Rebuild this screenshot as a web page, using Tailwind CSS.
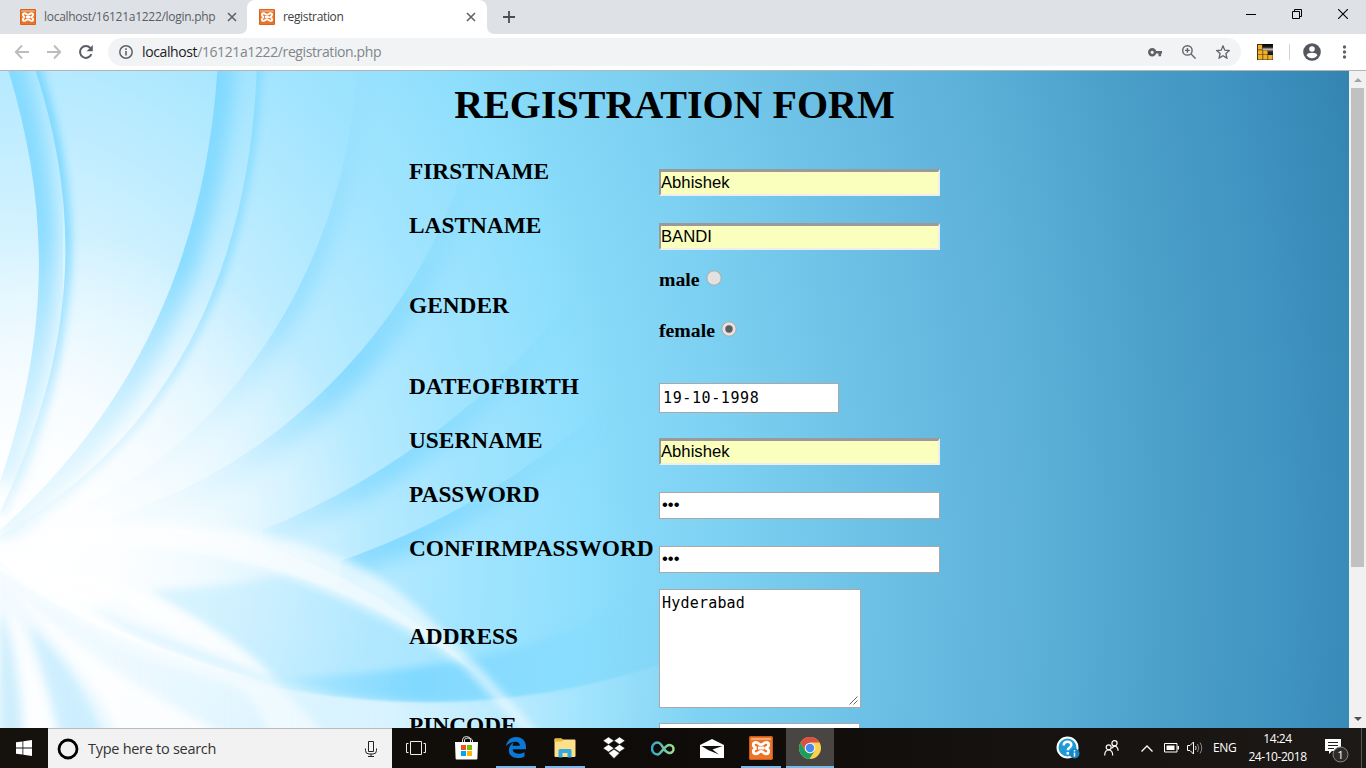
<!DOCTYPE html>
<html lang="en">
<head>
<meta charset="utf-8">
<title>registration</title>
<script src="https://cdn.jsdelivr.net/npm/@tailwindcss/browser@4"></script>
</head>
<body class="w-[1366px] h-[768px] overflow-hidden flex flex-col bg-white font-['Open_Sans','Noto_Sans',sans-serif] text-black">

<svg class="hidden">
  <symbol id="xampp" viewBox="0 0 24 24">
    <rect width="24" height="24" rx="2" fill="#ec7428"/>
    <rect x=".5" y=".5" width="23" height="23" rx="2" fill="none" stroke="#c95a17"/>
    <path d="M2 4V3q0-1 1-1h18q1 0 1 1v1z" fill="#f6a878"/>
    <path d="M9 12h6M7.500 12.100C5 11.200 4.300 10.300 4.300 8.700C4.300 7.200 5.300 6.300 6.900 6.300C9.300 6.300 9.600 8.700 12 8.700C14.400 8.700 14.700 6.300 17.100 6.300C18.700 6.300 19.700 7.200 19.700 8.700C19.700 10.300 19 11.200 16.500 12.100C19 12.900 19.700 13.800 19.700 15.300C19.700 16.900 18.700 17.800 17.100 17.800C14.700 17.800 14.400 15.400 12 15.400C9.600 15.400 9.300 17.800 6.900 17.800C5.300 17.800 4.300 16.900 4.300 15.300C4.300 13.800 5 12.900 7.500 12.100" fill="none" stroke="#fff" stroke-width="2.800" stroke-linejoin="round"/>
  </symbol>
</svg>

<!-- Tab strip -->
<header class="h-[34px] shrink-0 bg-[#dee1e6] flex text-[12px] text-[#5a5e63]">
  <div class="w-[247px] flex items-center pl-5">
    <svg class="size-4 shrink-0"><use href="#xampp"/></svg>
    <span class="ml-2 w-[180px] whitespace-nowrap tracking-[-0.28px]">localhost/16121a1222/login.php</span>
    <svg class="size-[10px] ml-[3px] shrink-0" viewBox="0 0 10 10"><path d="M1 1l8 8M9 1l-8 8" stroke="#5f6368" stroke-width="1.6"/></svg>
  </div>
  <div class="w-[240px] bg-white rounded-t-lg flex items-center pl-3 relative">
    <svg class="absolute -left-2 bottom-0 size-2" viewBox="0 0 8 8"><path d="M8 0v8H0q8 0 8-8" fill="#fff"/></svg>
    <svg class="absolute -right-2 bottom-0 size-2" viewBox="0 0 8 8"><path d="M0 0v8h8Q0 8 0 0" fill="#fff"/></svg>
    <svg class="size-4 shrink-0"><use href="#xampp"/></svg>
    <span class="ml-2 w-[180px] text-[#3c4043] tracking-[-0.35px]">registration</span>
    <svg class="size-[10px] ml-[3px] shrink-0" viewBox="0 0 10 10"><path d="M1 1l8 8M9 1l-8 8" stroke="#5f6368" stroke-width="1.6"/></svg>
  </div>
  <div class="pl-4 flex items-center"><svg class="size-3" viewBox="0 0 12 12"><path d="M6 0v12M0 6h12" stroke="#4a4d51" stroke-width="1.8"/></svg></div>
  <div class="ml-auto flex items-start pt-[9px] pr-[18px] gap-9">
    <svg class="size-[10px]" viewBox="0 0 10 10"><path d="M0 5.5h10" stroke="#000"/></svg>
    <svg class="size-[10px]" viewBox="0 0 10 10"><path d="M.5 2.5h7v7h-7zM2.500 2.500v-2h7v7h-2" fill="none" stroke="#000"/></svg>
    <svg class="size-[10px]" viewBox="0 0 10 10"><path d="M0 0l10 10M10 0L0 10" stroke="#000" stroke-width="1.100"/></svg>
  </div>
</header>

<!-- Toolbar -->
<div class="h-[37px] shrink-0 bg-white border-b border-[#b6b4b6] flex items-center">
  <svg class="w-4 h-4 ml-[14px]" viewBox="0 0 16 16"><path d="M15 8H2M8 1.500L1.800 8 8 14.500" fill="none" stroke="#babcbe" stroke-width="1.900"/></svg>
  <svg class="w-4 h-4 ml-4" viewBox="0 0 16 16"><path d="M1 8h13M8 1.500L14.200 8 8 14.500" fill="none" stroke="#babcbe" stroke-width="1.900"/></svg>
  <svg class="w-4 h-4 ml-4" viewBox="0 0 16 16"><path d="M13.400 10.200A5.900 5.900 0 1 1 12.400 4.100" fill="none" stroke="#5a5e63" stroke-width="2"/><path d="M14.800 1v6.200H8.600z" fill="#5a5e63"/></svg>
  <div class="ml-[14px] w-[1133px] h-7 rounded-full bg-[#f1f3f4] flex items-center">
    <svg class="ml-[11px] size-[14px]" viewBox="0 0 14 14"><circle cx="7" cy="7" r="6.200" fill="none" stroke="#5f6368" stroke-width="1.500"/><path d="M7 6v4.500M7 3.300v1.600" stroke="#5f6368" stroke-width="1.600"/></svg>
    <span class="ml-[9px] text-[14px] leading-7 tracking-[-0.39px] text-[#80868b] whitespace-nowrap"><span class="text-[#202124]">localhost</span>/16121a1222/registration.php</span>
    <svg class="ml-auto w-[14px] h-[9px]" viewBox="0 0 14 9"><circle cx="4.200" cy="4.300" r="2.900" fill="none" stroke="#5f6368" stroke-width="2.600"/><path d="M7 4.300h7M11.800 4.300v4" stroke="#5f6368" stroke-width="2.600"/></svg>
    <svg class="ml-5 size-[14px]" viewBox="0 0 14 14"><circle cx="5.400" cy="5.400" r="4.700" fill="none" stroke="#5f6368" stroke-width="1.400"/><path d="M9 9l4.600 4.600M3 5.400h4.800M5.400 3v4.800" stroke="#5f6368" stroke-width="1.400"/></svg>
    <svg class="ml-5 mr-[11px] size-[14px]" viewBox="0 0 14 14"><path d="M7 1l1.800 4.200 4.500.4-3.400 3 1 4.500L7 10.700l-3.900 2.400 1-4.500-3.400-3 4.500-.4z" fill="none" stroke="#5f6368" stroke-width="1.300"/></svg>
  </div>
  <svg class="ml-4 size-4" viewBox="0 0 16 16"><defs><linearGradient id="ext" x2="0" y2="1"><stop offset="0" stop-color="#000"/><stop offset=".3" stop-color="#222"/><stop offset=".48" stop-color="#c9c4bd"/><stop offset=".7" stop-color="#2a2725"/><stop offset="1" stop-color="#111"/></linearGradient></defs><rect width="16" height="16" fill="#4a3510"/><path d="M5.500 0H16v11h-5V6H5.500z" fill="url(#ext)"/><path d="M1 1h4v4.500H1zM1 6.200h4.500v4.200H1zM6.200 6.200h4.300v4.200H6.200zM1 11h4.500v4.500H1zM6.200 11h4.300v4.500H6.200zM11.200 11h4.300v4.500h-4.300z" fill="#efb02b"/></svg>
  <div class="ml-4 w-px h-4 bg-[#d0d2d5]"></div>
  <svg class="ml-[13px] size-[18px]" viewBox="0 0 18 18"><circle cx="9" cy="9" r="8.800" fill="#54585d"/><circle cx="9" cy="6" r="2.800" fill="#fff"/><path d="M3.600 12.200c1-3.200 9.800-3.200 10.800 0-2.200 4-8.600 4-10.800 0" fill="#fff"/></svg>
  <svg class="ml-[21px] w-[5px] h-[14px]" viewBox="0 0 5 14"><g fill="#5f6368"><circle cx="2.500" cy="2" r="1.700"/><circle cx="2.500" cy="7" r="1.700"/><circle cx="2.500" cy="12" r="1.700"/></g></svg>
</div>

<!-- Page viewport -->
<div class="h-[657px] shrink-0 flex overflow-hidden">
  <main class="w-[1349px] h-[657px] relative overflow-hidden font-['Liberation_Serif',serif] font-bold">
    <svg class="absolute inset-0 w-[1349px] h-[657px]" viewBox="0 71 1349 657" preserveAspectRatio="none">
      <defs>
        <radialGradient id="bg" gradientUnits="userSpaceOnUse" cx="0" cy="0" r="1420" gradientTransform="translate(0 560) scale(1 1.3)">
          <stop offset="0" stop-color="#fcfeff"/><stop offset=".08" stop-color="#f4fbff"/>
          <stop offset=".16" stop-color="#daf4ff"/><stop offset=".24" stop-color="#bdecff"/>
          <stop offset=".32" stop-color="#a4e5ff"/><stop offset=".41" stop-color="#8edffd"/>
          <stop offset=".46" stop-color="#85d7f7"/><stop offset=".54" stop-color="#78cdee"/>
          <stop offset=".63" stop-color="#6bbee4"/><stop offset=".73" stop-color="#5cb1d9"/>
          <stop offset=".83" stop-color="#4a9fc9"/><stop offset=".91" stop-color="#3f93c0"/>
          <stop offset="1" stop-color="#3181ae"/>
        </radialGradient>
        <radialGradient id="glow" gradientUnits="userSpaceOnUse" cx="60" cy="545" r="310">
          <stop offset="0" stop-color="#fff" stop-opacity=".9"/><stop offset=".4" stop-color="#fff" stop-opacity=".6"/><stop offset="1" stop-color="#fff" stop-opacity="0"/>
        </radialGradient>
        <radialGradient id="ink" gradientUnits="userSpaceOnUse" cx="0" cy="560" r="620">
          <stop offset="0" stop-color="#74d4ff" stop-opacity="0"/><stop offset=".4" stop-color="#74d4ff" stop-opacity=".3"/><stop offset=".65" stop-color="#70d3ff" stop-opacity=".95"/><stop offset=".8" stop-color="#74d4fc" stop-opacity=".6"/><stop offset="1" stop-color="#74d4fc" stop-opacity="0"/>
        </radialGradient>
        <linearGradient id="sweep" gradientUnits="userSpaceOnUse" x1="0" x2="700" y1="0" y2="0">
          <stop offset="0" stop-color="#e6f7ff" stop-opacity=".5"/><stop offset=".55" stop-color="#e6f7ff" stop-opacity=".75"/><stop offset="1" stop-color="#d8f3ff" stop-opacity="0"/>
        </linearGradient>
        <linearGradient id="band" gradientUnits="userSpaceOnUse" x1="270" x2="640" y1="0" y2="0">
          <stop offset="0" stop-color="#7ad6ff" stop-opacity=".2"/><stop offset=".4" stop-color="#76d5ff" stop-opacity=".8"/><stop offset="1" stop-color="#76d5ff" stop-opacity="0"/>
        </linearGradient>
        <filter id="b1" x="-30%" y="-30%" width="160%" height="160%"><feGaussianBlur stdDeviation="1.200"/></filter>
        <filter id="b4" x="-30%" y="-30%" width="160%" height="160%"><feGaussianBlur stdDeviation="4"/></filter>
        <filter id="b9" x="-60%" y="-30%" width="220%" height="160%"><feGaussianBlur stdDeviation="9"/></filter>
        <path id="cA" d="M5 60C50 200 52 330 0 482"/><clipPath id="kA"><path d="M5 60C50 200 52 330 0 482V728H1349V60z"/></clipPath>
        <path id="cB" d="M32 60C80 200 82 340 0 512"/><clipPath id="kB"><path d="M32 60C80 200 82 340 0 512V728H1349V60z"/></clipPath>
        <path id="cC" d="M218 60C208 240 145 400 0 530"/><clipPath id="kC"><path d="M218 60C208 240 145 400 0 530V728H1349V60z"/></clipPath>
        <path id="cD" d="M257 60C252 250 185 430 0 535"/><clipPath id="kD"><path d="M257 60C252 250 185 430 0 535V728H1349V60z"/></clipPath>
        <path id="cE" d="M357 60C350 270 220 455 60 515"/><clipPath id="kE"><path d="M357 60C350 270 220 455 60 515V728H1349V60z"/></clipPath>
        <path id="cF" d="M482 60C475 260 310 460 110 517"/><clipPath id="kF"><path d="M482 60C475 260 310 460 110 517V728H1349V60z"/></clipPath>
        <path id="cG" d="M640 180C560 360 400 475 262 530"/><clipPath id="kG"><path d="M640 180C560 360 400 475 262 530V728H1349V180z"/></clipPath>
        <path id="cH" d="M690 320C580 445 460 520 340 561"/><clipPath id="kH"><path d="M690 320C580 445 460 520 340 561V728H1349V320z"/></clipPath>
      </defs>
      <rect y="60" width="1349" height="680" fill="url(#bg)"/>
      <g fill="none" stroke="#6ed3ff">
        <g clip-path="url(#kA)"><use href="#cA" stroke-width="36" filter="url(#b9)" opacity=".7"/></g>
        <g clip-path="url(#kB)"><use href="#cB" stroke-width="12" filter="url(#b4)" opacity=".8"/></g>
        <g clip-path="url(#kC)"><use href="#cC" stroke-width="36" filter="url(#b9)" opacity=".7"/></g>
        <g clip-path="url(#kD)"><use href="#cD" stroke-width="10" filter="url(#b4)" opacity=".6"/></g>
      </g>
      <g fill="none" stroke="url(#ink)">
        <g clip-path="url(#kE)"><use href="#cE" stroke-width="26" filter="url(#b9)" opacity=".5"/></g>
        <g clip-path="url(#kF)"><use href="#cF" stroke-width="40" filter="url(#b9)" opacity=".7"/></g>
        <g clip-path="url(#kG)"><use href="#cG" stroke-width="34" filter="url(#b9)" opacity=".65"/></g>
        <g clip-path="url(#kH)"><use href="#cH" stroke-width="36" filter="url(#b9)" opacity=".75"/></g>
      </g>
      <rect y="230" width="370" height="510" fill="url(#glow)"/>
      <path d="M150 590Q230 588 292 573Q380 605 440 650L470 660Q380 685 275 680Q200 620 150 590z" fill="#aee7ff" opacity=".4" filter="url(#b4)"/>
      <path d="M275 679Q400 674 500 652Q580 632 640 590V668Q540 704 430 702Q340 700 275 679z" fill="url(#band)" filter="url(#b4)"/>
      <path d="M0 562C90 640 200 665 275 687C420 715 560 705 700 650V740H0z" fill="url(#sweep)" filter="url(#b1)"/>
      <path d="M120 600C180 640 230 655 270 680C190 665 130 640 90 605z" fill="#d6f2ff" opacity=".6" filter="url(#b4)"/>
      <path d="M0 546C110 515 230 515 340 558C400 582 430 620 480 668L540 735H528L465 668C400 620 300 575 200 550C120 539 50 544 0 550z" fill="#fff" opacity=".6" filter="url(#b4)"/>
      <path d="M0 550C100 538 180 544 290 574C380 604 440 645 480 676C420 620 350 570 230 535C140 522 60 530 0 545z" fill="#fff" opacity=".35" filter="url(#b1)"/>
      <path d="M0 557C110 575 220 615 278 682C200 645 80 610 0 566z" fill="#fff" opacity=".75" filter="url(#b4)"/>
      <path d="M0 566C90 625 180 655 280 687L330 740H270Q260 700 232 685Q100 650 0 570z" fill="#fff" opacity=".5" filter="url(#b4)"/>
      <path d="M0 566C90 625 180 660 285 688Q120 650 0 570z" fill="#fff" opacity=".8" filter="url(#b1)"/>
      <path d="M0 574C50 640 90 670 118 735H225C150 695 60 640 0 574z" fill="#fff" opacity=".85" filter="url(#b4)"/>
      <path d="M0 592C22 640 26 690 26 740H58C40 680 30 640 0 592z" fill="#fff" opacity=".85" filter="url(#b4)"/>
      <path d="M0 610Q18 660 22 740H0z" fill="#b9e6fb" opacity=".6" filter="url(#b4)"/>
      <path d="M28 625Q80 670 105 740H62Q45 670 28 625z" fill="#b9e8ff" opacity=".6" filter="url(#b4)"/>
    </svg>

    <div class="relative">
      <h1 class="h-[73px] pt-[11px] text-[40px] leading-[46px] text-center">REGISTRATION FORM</h1>
      <div class="pl-[409px] text-[23.35px]">
        <div class="h-[54px] flex"><h3 class="w-[250px] leading-[54px]">FIRSTNAME</h3>
          <div class="mt-[25px] w-[281px] h-[27px] bg-[#faffbd] border-2 border-t-[3px] border-t-[#9a9a9a] border-l-[#9a9a9a] border-r-[#eee] border-b-[#eee] font-['Liberation_Sans',sans-serif] font-normal text-[16.67px] leading-[21px]">Abhishek</div></div>
        <div class="h-[54px] flex"><h3 class="w-[250px] leading-[54px]">LASTNAME</h3>
          <div class="mt-[25px] w-[281px] h-[27px] bg-[#faffbd] border-2 border-t-[3px] border-t-[#9a9a9a] border-l-[#9a9a9a] border-r-[#eee] border-b-[#eee] font-['Liberation_Sans',sans-serif] font-normal text-[16.67px] leading-[21px]">BANDI</div></div>
        <div class="h-[107px] flex"><h3 class="w-[250px] leading-[106px]">GENDER</h3>
          <div class="pt-[14px] text-[19.8px] leading-[26px]">
            <div class="h-[51px] flex">male<svg class="ml-[6px] mt-1 size-4" viewBox="0 0 16 16"><circle cx="8" cy="8" r="7.200" fill="#e4e2e1" stroke="#a9a9a9" stroke-width="1"/></svg></div>
            <div class="flex">female<svg class="ml-[6px] mt-1 size-4" viewBox="0 0 16 16"><circle cx="8" cy="8" r="7.200" fill="#e4e2e1" stroke="#a9a9a9" stroke-width="1"/><circle cx="8" cy="8" r="3.700" fill="#5c5c5c"/></svg></div>
          </div></div>
        <div class="h-[54px] flex"><h3 class="w-[250px] leading-[54px]">DATEOFBIRTH</h3>
          <div class="mt-6 w-[180px] h-[30px] bg-white border border-[#a9a9a9] pl-[3px] font-['DejaVu_Sans_Mono',monospace] font-normal text-[15px] tracking-[0.6px] leading-[29px]">19-10-1998</div></div>
        <div class="h-[54px] flex"><h3 class="w-[250px] leading-[54px]">USERNAME</h3>
          <div class="mt-[25px] w-[281px] h-[27px] bg-[#faffbd] border-2 border-t-[3px] border-t-[#9a9a9a] border-l-[#9a9a9a] border-r-[#eee] border-b-[#eee] font-['Liberation_Sans',sans-serif] font-normal text-[16.67px] leading-[21px]">Abhishek</div></div>
        <div class="h-[54px] flex"><h3 class="w-[250px] leading-[54px]">PASSWORD</h3>
          <div class="mt-[25px] w-[281px] h-[27px] bg-white border border-[#a9a9a9] pl-[2px] font-['Liberation_Sans',sans-serif] font-normal text-[16.67px] leading-[24px]">•••</div></div>
        <div class="h-[54px] flex"><h3 class="w-[250px] leading-[54px]">CONFIRMPASSWORD</h3>
          <div class="mt-[25px] w-[281px] h-[27px] bg-white border border-[#a9a9a9] pl-[2px] font-['Liberation_Sans',sans-serif] font-normal text-[16.67px] leading-[24px]">•••</div></div>
        <div class="h-[122px] flex"><h3 class="w-[250px] leading-[122px]">ADDRESS</h3>
          <div class="mt-[14px] w-[202px] h-[119px] bg-white border border-[#a9a9a9] pl-[2px] pt-[3px] flex justify-between font-['DejaVu_Sans_Mono',monospace] font-normal text-[15px] tracking-[0.2px] leading-[20px]">Hyderabad<svg class="self-end size-[9px] mr-[2px] mb-[2px]" viewBox="0 0 9 9"><path d="M.5 8.500l8-8M4.500 8.500l4-4" stroke="#555" stroke-width=".9"/></svg></div></div>
        <div class="h-[54px] flex"><h3 class="w-[250px] leading-[56px]">PINCODE</h3>
          <div class="mt-[26px] w-[201px] h-[27px] bg-white border border-[#a9a9a9]"></div></div>
      </div>
    </div>
  </main>
  <div class="w-[17px] bg-[#f1f1f1] flex flex-col items-center">
    <svg class="mt-[7px] w-2 h-[4px] shrink-0" viewBox="0 0 8 4"><path d="M0 4l4-4 4 4z" fill="#a3a3a3"/></svg>
    <div class="mt-[6px] w-[13px] h-[479px] bg-[#c1c1c1]"></div>
    <svg class="mt-auto mb-[7px] w-2 h-[4px] shrink-0" viewBox="0 0 8 4"><path d="M0 0l4 4 4-4z" fill="#505050"/></svg>
  </div>
</div>

<!-- Taskbar -->
<footer class="h-10 shrink-0 flex bg-linear-to-r from-[#15120e] via-[#0e0b08] to-[#1c1916] text-white">
  <div class="w-12 flex items-center justify-center"><svg class="size-4" viewBox="0 0 16 16"><path d="M0 2.300l6.500-.9v6.200H0zM7.300 1.300L16 0v7.600H7.300zM0 8.400h6.500v6.200L0 13.700zM7.300 8.400H16V16l-8.700-1.300z" fill="#fff"/></svg></div>
  <div class="w-[344px] bg-[#f2f2f2] border-t border-[#bbb] flex items-center pl-[9px] pr-[15px]">
    <svg class="size-[22px]" viewBox="0 0 22 22"><circle cx="11" cy="11" r="9" fill="none" stroke="#000" stroke-width="2.800"/></svg>
    <span class="ml-[9px] text-[14.5px] text-[#333] tracking-[-0.28px]">Type here to search</span>
    <svg class="ml-auto w-3 h-4" viewBox="0 0 12 16"><path d="M3.500.5h5v10h-5zM.5 7.500v2q0 3.500 3.500 3.500h4q3.500 0 3.500-3.500v-2M6 13v2.500M3 15.500h6" fill="none" stroke="#222"/></svg>
  </div>
  <nav class="flex">
    <div class="w-[49px] pr-px flex items-center justify-center"><svg class="w-5 h-[14px]" viewBox="0 0 20 14"><path d="M4.500.5h11v13h-11zM2.500 2.500h-2v9h2M17.500 2.500h2v9h-2" fill="none" stroke="#eee"/></svg></div>
    <div class="w-[49px] pl-px flex items-center justify-center"><svg class="w-[23px] h-6" viewBox="0 0 23 24"><path d="M7.500 6V4q0-3.500 4-3.500t4 3.500v2M9.500 6V4q0-2 3.500-2t4.500 2v2" fill="none" stroke="#ddd"/><path d="M0 6h23l-.6 16.500q0 1-1 1H1.600q-1 0-1-1z" fill="#fff"/><path d="M6 9h5v5H6z" fill="#f25022"/><path d="M12 9h5v5h-5z" fill="#7fba00"/><path d="M6 15h5v5H6z" fill="#00a4ef"/><path d="M12 15h5v5h-5z" fill="#ffb900"/></svg></div>
    <div class="w-[49px] ml-px flex flex-col items-center justify-between pt-[9px]"><svg class="w-5 h-[21px] shrink-0" viewBox="0 0 20 21"><path d="M0 9.300C.8 3.700 4.700 0 10.300 0 16.200 0 20 4.200 20 10v2.300H6.700c.2 3 2.800 4.400 6.100 4.400 2.200 0 4.200-.6 5.700-1.500v4.300c-1.800 1-4.100 1.500-6.700 1.500C6.300 21 2.800 18 2.800 13.300c0-3.600 2.100-6.400 5.200-7.900-.8.900-1.300 2-1.500 3.300h7.400C13.800 6 12.200 4.700 9.400 4.700 5.600 4.700 2.300 6.500 0 9.300z" fill="#0b78d7"/></svg><div class="w-10 h-[2px] bg-[#76b9ed]"></div></div>
    <div class="w-[49px] flex flex-col items-center justify-between pt-[10px]"><svg class="w-[22px] h-[20px] shrink-0" viewBox="0 0 22 20"><path d="M.5 1.500q0-1 1-1h5.800q.8 0 1.200 1h12q1 0 1 1V18q0 1-1 1h-19q-1 0-1-1z" fill="#ffe08a"/><path d="M.5 1.500q0-1 1-1h5.800q.8 0 1.500 1.700l-.8 1.300H.5z" fill="#e8b93a"/><path d="M4.500 19.500v-7q0-1.500 1.500-1.500h10q1.500 0 1.500 1.500v7h-4V15h-5v4.500z" fill="#35a9e4"/></svg><div class="w-10 h-[2px] bg-[#76b9ed]"></div></div>
    <div class="w-[49px] flex items-center justify-center"><svg class="w-6 h-[22px]" viewBox="0 0 24 22"><path d="M6.500 0l5.500 3.700-5.500 3.700L1 3.700zM17.500 0L23 3.700l-5.500 3.700L12 3.700zM6.500 7.500l5.500 3.700-5.500 3.700L1 11.200zM17.500 7.500l5.500 3.700-5.500 3.700L12 11.200zM6.500 16l5.500-3.700 5.500 3.700-5.500 5.500z" fill="#fff" stroke="#12100c" stroke-width=".5"/></svg></div>
    <div class="w-[49px] pl-px flex items-center justify-center"><svg class="w-[25px] h-[15px]" viewBox="0 0 25 15"><defs><linearGradient id="inf"><stop offset="0" stop-color="#35a6cc"/><stop offset="1" stop-color="#9fdc8c"/></linearGradient></defs><path d="M12.500 7.500C10.500 3.500 9 1.500 6.500 1.500a5.500 6 0 0 0 0 12C10.500 13.500 13 4 18.500 4a4 4 0 0 1 0 8C15.500 12 14 9.500 12.500 7.500z" fill="none" stroke="url(#inf)" stroke-width="2.500"/></svg></div>
    <div class="w-[49px] flex items-center justify-center"><svg class="w-6 h-[19px]" viewBox="0 0 24 19"><path d="M0 6L12 0l12 6v13H0z" fill="#fff"/><path d="M1.500 7h21L12.500 10.500l6.500 5L8 11z" fill="#14110d"/></svg></div>
    <div class="w-[49px] flex flex-col items-center justify-between pt-2"><svg class="size-6 shrink-0"><use href="#xampp"/></svg><div class="w-10 h-[2px] bg-[#76b9ed]"></div></div>
    <div class="w-12 ml-px bg-[#484542] flex flex-col items-center justify-between pt-[9px]"><svg class="size-[22px] shrink-0" viewBox="0 0 22 22"><circle cx="11" cy="11" r="11" fill="#fdd14c"/><path d="M1.500 5.500A11 11 0 0 1 20.500 5.500H11L6.200 13.700z" fill="#dd4f43"/><path d="M1.500 5.500A11 11 0 0 0 10.500 22L15.700 13.700 11 16.500 6.200 13.700z" fill="#1a9f5e"/><circle cx="11" cy="11" r="5.300" fill="#f3f3f3"/><circle cx="11" cy="11" r="4.200" fill="#4688f1"/></svg><div class="w-full h-[2px] bg-[#76b9ed]"></div></div>
  </nav>
  <div class="ml-auto flex items-center text-[12px]">
    <svg class="size-6" viewBox="0 0 24 24"><circle cx="11.500" cy="11.500" r="10" fill="#1d9bd7" stroke="#fff" stroke-width="2"/><path d="M7.700 9.500q0-3.800 3.800-3.800t3.800 3.300c0 2.500-3.500 2.500-3.500 5.300M11.800 16v2.500" fill="none" stroke="#fff" stroke-width="2.500"/><circle cx="18.500" cy="17.500" r="5" fill="#1687c4"/><path d="M18.500 16.500v4M18.500 14v1.500" stroke="#fff" stroke-width="1.500"/></svg>
    <svg class="ml-6 w-[15px] h-4" viewBox="0 0 15 16"><g fill="none" stroke="#fff" stroke-width="1.200"><circle cx="4.700" cy="7.300" r="2.500"/><path d="M.7 15.500q0-5.500 4-5.500t4 5.500"/><circle cx="10.500" cy="3.300" r="2.600"/><path d="M7.600 8.500q3-4.200 5.500-1.200.9 1 1 3.500"/></g></svg>
    <svg class="ml-[22px] w-3 h-[7px]" viewBox="0 0 12 7"><path d="M.5 6.500L6 1l5.500 5.500" fill="none" stroke="#fff" stroke-width="1.300"/></svg>
    <svg class="ml-[11px] w-[15px] h-[10px]" viewBox="0 0 15 10"><path d="M.5.500h12.500v8.500H.5z" fill="none" stroke="#fff"/><path d="M2.500 2.500h8v4.500h-8zM13.500 3H15v3.500h-1.500z" fill="#fff"/></svg>
    <svg class="ml-2 w-4 h-[14px]" viewBox="0 0 16 14"><path d="M.5 4.500H3L6.500 1v12L3 9.500H.5z" fill="none" stroke="#fff"/><path d="M8.500 5q1.200 2 0 4" fill="none" stroke="#ddd"/><path d="M10.500 3q2.500 4 0 8M13 1.500q3.500 5.500 0 11" fill="none" stroke="#888"/></svg>
    <span class="ml-[10px] w-[25px] tracking-[-0.4px]">ENG</span>
    <div class="ml-[6px] w-[67px] text-center leading-[18px] whitespace-nowrap tracking-[-0.45px]"><div>14:24</div><div>24-10-2018</div></div>
    <svg class="ml-[14px] w-6 h-[25px] mt-1" viewBox="0 0 24 25"><path d="M0 1h16v12H7l-3 3v-3H0z" fill="#fff"/><path d="M3 4.500h10M3 7.500h10M3 10.500h6" stroke="#222" stroke-width="1"/><circle cx="15.500" cy="16.500" r="7.500" fill="#2e2c2a" stroke="#8a8a8a"/><text x="15.500" y="20.700" font-size="11.500" text-anchor="middle" fill="#fff">1</text></svg>
    <div class="ml-3 w-px h-10 mr-1 bg-[#5a5755]"></div>
  </div>
</footer>
</body>
</html>
